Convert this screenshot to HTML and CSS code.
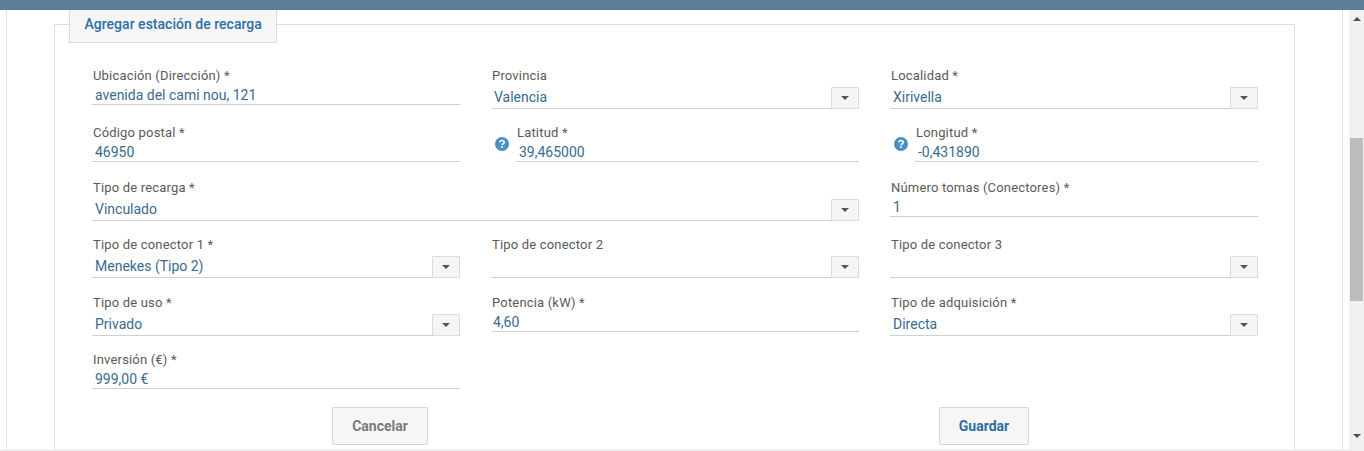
FILE: index.html
```html
<!DOCTYPE html>
<html lang="es">
<head>
<meta charset="utf-8">
<title>Agregar estación de recarga</title>
<link rel="stylesheet" href="styles.css">
</head>
<body>
<div class="topbar"></div>
<div class="layout">
  <main class="content">
    <section class="panel">
      <h2 class="tab">Agregar estación de recarga</h2>
      <form class="form">
        <div class="row row-a">
          <div class="field"><label class="lbl">Ubicación (Dirección) *</label><div class="val input">avenida del cami nou, 121</div></div>
          <div class="field"><label class="lbl">Provincia</label><div class="val select"><span class="txt">Valencia</span><span class="arrow"></span></div></div>
          <div class="field"><label class="lbl">Localidad *</label><div class="val select"><span class="txt">Xirivella</span><span class="arrow"></span></div></div>
        </div>
        <div class="row row-b">
          <div class="field"><label class="lbl">Código postal *</label><div class="val input">46950</div></div>
          <div class="field help"><svg class="q" viewBox="0 0 14 14"><circle cx="7" cy="7" r="7" fill="#4a90c8"/><path d="M4.9 5.4c.1-1.300 1-1.900 2.200-1.900 1.300 0 2.100.7 2.100 1.700 0 1.600-2 1.500-2 3" fill="none" stroke="#fff" stroke-width="1.600"/><rect x="6.200" y="9.300" width="1.700" height="1.700" fill="#fff"/></svg><div class="grow"><label class="lbl">Latitud *</label><div class="val input">39,465000</div></div></div>
          <div class="field help"><svg class="q" viewBox="0 0 14 14"><circle cx="7" cy="7" r="7" fill="#4a90c8"/><path d="M4.9 5.4c.1-1.300 1-1.900 2.200-1.900 1.300 0 2.100.7 2.100 1.700 0 1.600-2 1.500-2 3" fill="none" stroke="#fff" stroke-width="1.600"/><rect x="6.200" y="9.300" width="1.700" height="1.700" fill="#fff"/></svg><div class="grow"><label class="lbl">Longitud *</label><div class="val input">-0,431890</div></div></div>
        </div>
        <div class="row row-a">
          <div class="field span2"><label class="lbl">Tipo de recarga *</label><div class="val select"><span class="txt">Vinculado</span><span class="arrow"></span></div></div>
          <div class="field"><label class="lbl">Número tomas (Conectores) *</label><div class="val input">1</div></div>
        </div>
        <div class="row row-c">
          <div class="field"><label class="lbl">Tipo de conector 1 *</label><div class="val select"><span class="txt">Menekes (Tipo 2)</span><span class="arrow"></span></div></div>
          <div class="field"><label class="lbl">Tipo de conector 2</label><div class="val select"><span class="txt"></span><span class="arrow"></span></div></div>
          <div class="field"><label class="lbl">Tipo de conector 3</label><div class="val select"><span class="txt"></span><span class="arrow"></span></div></div>
        </div>
        <div class="row row-a">
          <div class="field"><label class="lbl">Tipo de uso *</label><div class="val select"><span class="txt">Privado</span><span class="arrow"></span></div></div>
          <div class="field"><label class="lbl">Potencia (kW) *</label><div class="val input tight">4,60</div></div>
          <div class="field"><label class="lbl">Tipo de adquisición *</label><div class="val select"><span class="txt">Directa</span><span class="arrow"></span></div></div>
        </div>
        <div class="row row-d">
          <div class="field"><label class="lbl">Inversión (€) *</label><div class="val input">999,00 €</div></div>
        </div>
        <div class="actions">
          <button type="button" class="btn cancel">Cancelar</button>
          <button type="button" class="btn save">Guardar</button>
        </div>
      </form>
    </section>
  </main>
  <aside class="scrollbar"><span class="sb-up"></span><span class="sb-thumb"></span><span class="sb-down"></span></aside>
</div>
<div class="bottom"></div>
</body>
</html>
```
FILE: styles.css
```css
* { box-sizing: border-box; }
html, body { margin: 0; height: 451px; overflow: hidden; background: #fff; }
body { font-family: Roboto, "Liberation Sans", sans-serif; display: flex; flex-direction: column; }
.topbar { height: 10px; background: #5b7f98; flex: none; }
.layout { display: flex; height: 439px; flex: none; }
.content { flex: 1; margin-left: 6px; border-left: 1px solid #e3e3e3; border-right: 1px solid #e0e0e0; margin-right: 6px; padding: 14px 47px 0 47px; overflow: hidden; }
.panel { border: 1px solid #dedede; border-bottom: 0; height: 440px; padding: 0 0 0 37px; }
.tab { margin: -15px 0 0 -23px; width: 208px; height: 33px; background: #f6f6f6; border: 1px solid #dcdcdc; border-top: 0; font-size: 14px; font-weight: 500; color: #2e6ea6; line-height: 28px; padding-left: 14.5px; letter-spacing: .02px; }
.form { margin-top: 25px; width: 1166px; }
.row { display: grid; grid-template-columns: repeat(3, 368px); column-gap: 31px; }
.row-a { height: 57px; }
.row-b { height: 55px; }
.row-c { height: 58px; }
.row-d { height: 57px; }
.span2 { grid-column: span 2; }
.field { display: flex; flex-direction: column; }
.help { flex-direction: row; align-items: flex-start; }
.grow { flex: 1; }
.q { width: 14px; height: 14px; margin: 12px 7px 0 4px; flex: none; }
.lbl { display: block; font-size: 13px; line-height: 15px; letter-spacing: .18px; color: #5a5a5a; padding-left: 1px; }
.val { font-size: 14px; color: #3a6a90; border-bottom: 1px solid #d0d0d0; }
.input { height: 22px; line-height: 17px; padding: 4px 0 0 3px; }
.input.tight { padding-left: 2px; }
.select { display: flex; justify-content: space-between; align-items: flex-end; height: 26px; padding-left: 3px; }
.txt { line-height: 17px; margin-bottom: 2px; }
.arrow { width: 28px; height: 22px; margin-bottom: -1px; background: #f5f5f5; border: 1px solid #dcdcdc; border-radius: 1px; display: flex; align-items: center; justify-content: center; flex: none; }
.arrow::after { content: ""; border-left: 4px solid transparent; border-right: 4px solid transparent; border-top: 4px solid #555; }
.actions { display: flex; margin-top: -2px; padding-left: 240px; }
.btn { height: 38px; background: #f6f6f6; border: 1px solid #d8d8d8; border-radius: 1px; font: 700 14px Roboto, "Liberation Sans", sans-serif; }
.cancel { width: 96px; color: #7a7a7a; }
.save { width: 90px; margin-left: 511px; color: #2e6ea6; }
.scrollbar { width: 15px; background: #f1f1f1; display: flex; flex-direction: column; align-items: center; flex: none; }
.sb-up { margin-top: 7px; border-left: 4px solid transparent; border-right: 4px solid transparent; border-bottom: 4px solid #505050; }
.sb-thumb { margin-top: 117px; width: 13px; height: 163px; background: #bdbdbd; }
.sb-down { margin-top: 133px; border-left: 4px solid transparent; border-right: 4px solid transparent; border-top: 4px solid #505050; }
.bottom { height: 2px; background: #efefef; flex: none; }
```
